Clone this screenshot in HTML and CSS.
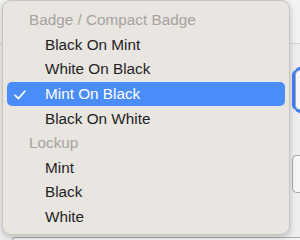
FILE: index.html
```html
<!DOCTYPE html>
<html>
<head>
<meta charset="utf-8">
<link rel="stylesheet" href="styles.css">
</head>
<body>
<div class="backdrop">
  <div class="toolbar"></div>
  <div class="field focused"></div>
  <div class="field plain"></div>
  <div class="field bottom"></div>
</div>
<div class="menu">
  <div class="header">Badge / Compact Badge</div>
  <div class="item">Black On Mint</div>
  <div class="item">White On Black</div>
  <div class="item selected">
    <svg class="check" width="12" height="10" viewBox="0 0 12 10"><polyline points="1.2,5.4 4.4,8.6 10.8,1.2" fill="none" stroke="#fff" stroke-width="1.7" stroke-linecap="round" stroke-linejoin="round"/></svg>
    Mint On Black
  </div>
  <div class="item">Black On White</div>
  <div class="header">Lockup</div>
  <div class="item">Mint</div>
  <div class="item">Black</div>
  <div class="item">White</div>
</div>
</body>
</html>
```
FILE: styles.css
```css
html, body {
  margin: 0;
  padding: 0;
}
body {
  width: 300px;
  height: 240px;
  overflow: hidden;
  background: #eeeeee;
  position: relative;
  font-family: "Liberation Sans", Arial, sans-serif;
}
.backdrop {
  display: flex;
  flex-direction: column;
  height: 240px;
  overflow: hidden;
}
.toolbar {
  flex: none;
  height: 43px;
  background: #f2f2f2;
  border-bottom: 1px solid #d4d4d4;
}
.field {
  flex: none;
  box-sizing: border-box;
  background: #f6f6f6;
  border: 1px solid #a9a9a9;
  border-right: none;
  border-radius: 5px 0 0 5px;
}
.focused {
  margin-top: 26px;
  margin-left: 295px;
  width: 5px;
  height: 40px;
  box-shadow: -3px 0 0 0 #3d7ff6, 0 -3px 0 0 #3d7ff6, 0 3px 0 0 #3d7ff6;
}
.plain {
  margin-top: 45px;
  margin-left: 292px;
  width: 8px;
  height: 38px;
}
.bottom {
  margin-top: 44px;
  margin-left: 12px;
  width: 288px;
  height: 3px;
  border-bottom: none;
  border-radius: 5px 0 0 0;
}
.menu {
  position: absolute;
  left: 2px;
  top: 0;
  width: 288px;
  height: 235px;
  box-sizing: border-box;
  padding: 7px 4px;
  background: #e9e5e0;
  border: 1px solid #c9c5c1;
  border-radius: 9px;
  box-shadow: 0 2px 6px rgba(0, 0, 0, 0.22);
}
.header, .item {
  height: 24.6px;
  display: flex;
  align-items: center;
  font-size: 15.3px;
  position: relative;
}
.header {
  color: #a6a29e;
  padding-left: 22px;
}
.item {
  color: #1f1f1f;
  padding-left: 38px;
}
.selected {
  background: #4a8df8;
  color: #ffffff;
  border-radius: 5px;
}
.check {
  position: absolute;
  left: 7px;
  top: 8px;
}
```
